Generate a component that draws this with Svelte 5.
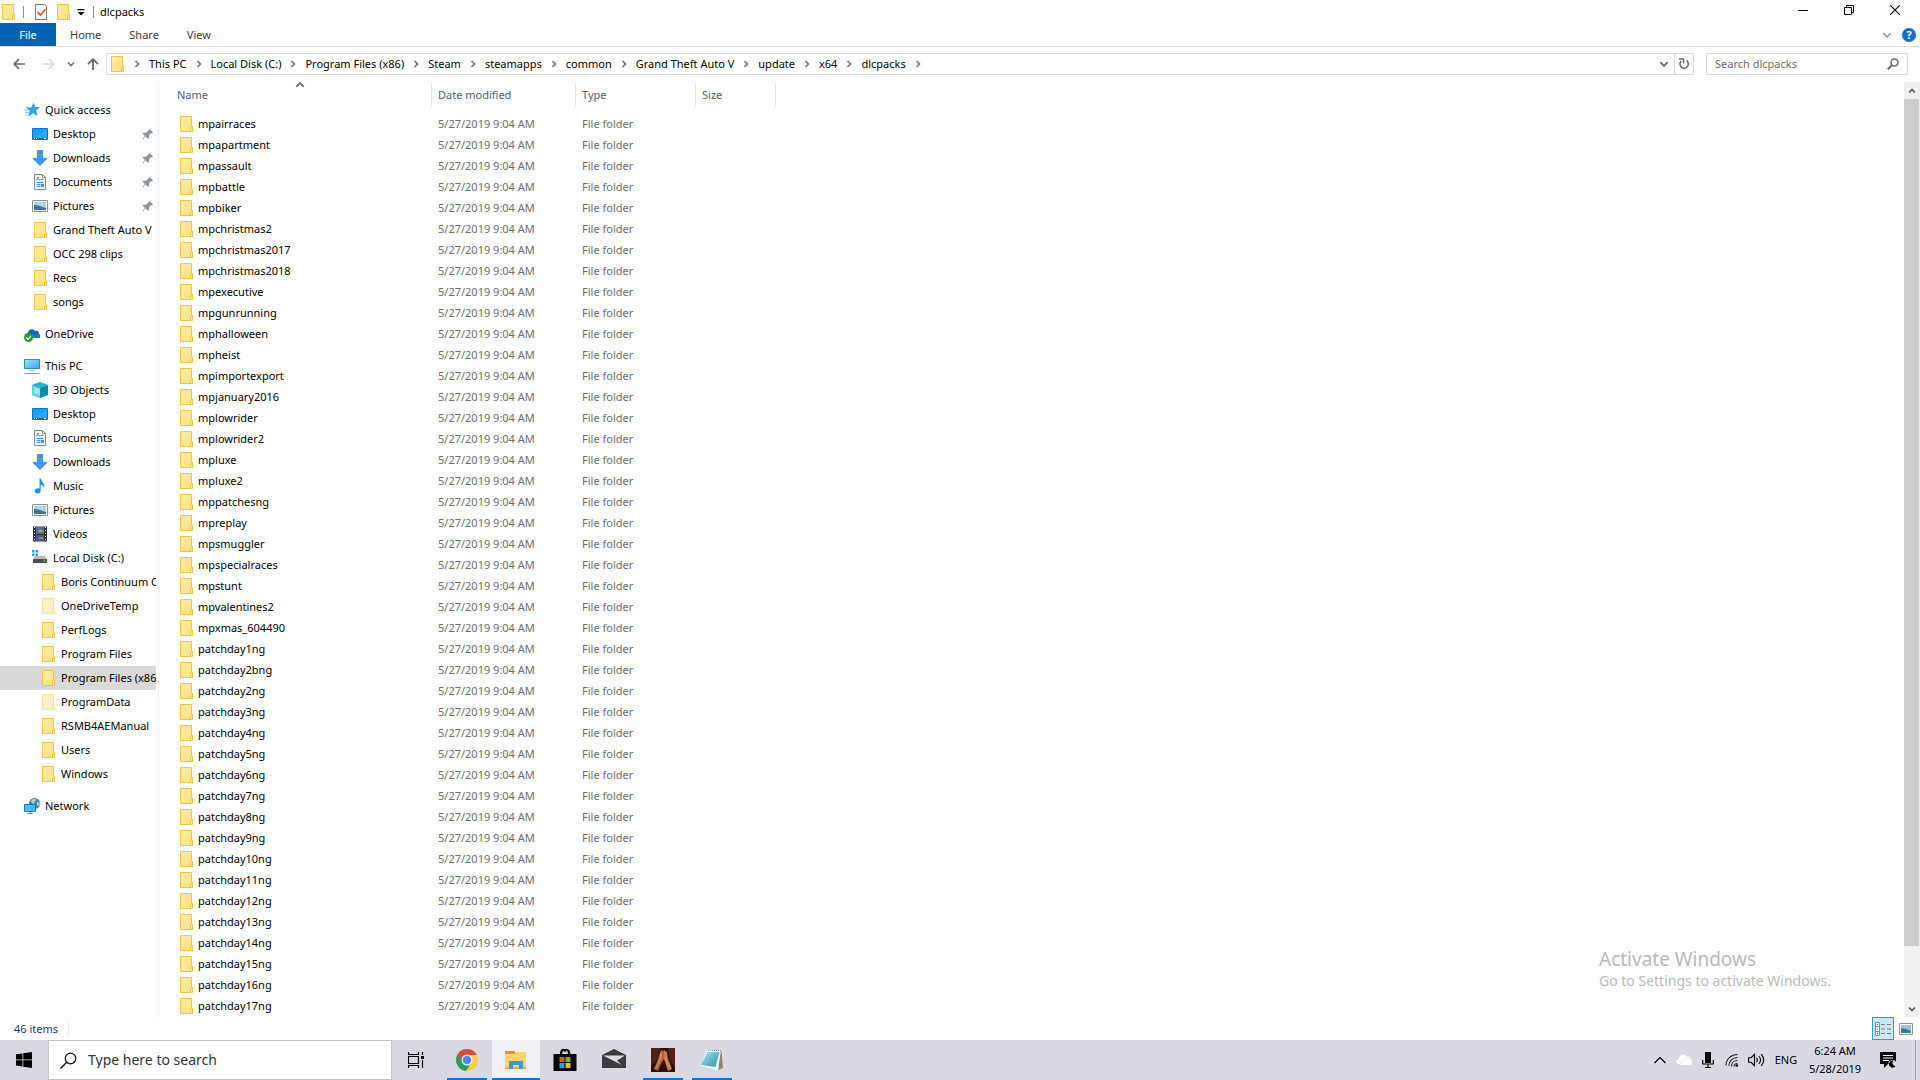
<script lang="ts">
  type NavItem = { label: string; icon: string; level: number; pinned?: boolean; selected?: boolean };

  const tabs = ['Home', 'Share', 'View'];

  const crumbs = [
    'This PC', 'Local Disk (C:)', 'Program Files (x86)', 'Steam', 'steamapps',
    'common', 'Grand Theft Auto V', 'update', 'x64', 'dlcpacks',
  ];

  const navGroups: NavItem[][] = [
    [
      { label: 'Quick access', icon: 'star', level: 0 },
      { label: 'Desktop', icon: 'desktop', level: 1, pinned: true },
      { label: 'Downloads', icon: 'download', level: 1, pinned: true },
      { label: 'Documents', icon: 'document', level: 1, pinned: true },
      { label: 'Pictures', icon: 'picture', level: 1, pinned: true },
      { label: 'Grand Theft Auto V', icon: 'folder', level: 1 },
      { label: 'OCC 298 clips', icon: 'folder', level: 1 },
      { label: 'Recs', icon: 'folder', level: 1 },
      { label: 'songs', icon: 'folder', level: 1 },
    ],
    [{ label: 'OneDrive', icon: 'onedrive', level: 0 }],
    [
      { label: 'This PC', icon: 'pc', level: 0 },
      { label: '3D Objects', icon: 'cube', level: 1 },
      { label: 'Desktop', icon: 'desktop', level: 1 },
      { label: 'Documents', icon: 'document', level: 1 },
      { label: 'Downloads', icon: 'download', level: 1 },
      { label: 'Music', icon: 'music', level: 1 },
      { label: 'Pictures', icon: 'picture', level: 1 },
      { label: 'Videos', icon: 'video', level: 1 },
      { label: 'Local Disk (C:)', icon: 'disk', level: 1 },
      { label: 'Boris Continuum Complete', icon: 'folder', level: 2 },
      { label: 'OneDriveTemp', icon: 'hidden', level: 2 },
      { label: 'PerfLogs', icon: 'folder', level: 2 },
      { label: 'Program Files', icon: 'folder', level: 2 },
      { label: 'Program Files (x86)', icon: 'folder', level: 2, selected: true },
      { label: 'ProgramData', icon: 'hidden', level: 2 },
      { label: 'RSMB4AEManual', icon: 'folder', level: 2 },
      { label: 'Users', icon: 'folder', level: 2 },
      { label: 'Windows', icon: 'folder', level: 2 },
    ],
    [{ label: 'Network', icon: 'network', level: 0 }],
  ];

  const folders = [
    'mpairraces', 'mpapartment', 'mpassault', 'mpbattle', 'mpbiker', 'mpchristmas2',
    'mpchristmas2017', 'mpchristmas2018', 'mpexecutive', 'mpgunrunning', 'mphalloween',
    'mpheist', 'mpimportexport', 'mpjanuary2016', 'mplowrider', 'mplowrider2', 'mpluxe',
    'mpluxe2', 'mppatchesng', 'mpreplay', 'mpsmuggler', 'mpspecialraces', 'mpstunt',
    'mpvalentines2', 'mpxmas_604490', 'patchday1ng', 'patchday2bng', 'patchday2ng',
    'patchday3ng', 'patchday4ng', 'patchday5ng', 'patchday6ng', 'patchday7ng',
    'patchday8ng', 'patchday9ng', 'patchday10ng', 'patchday11ng', 'patchday12ng',
    'patchday13ng', 'patchday14ng', 'patchday15ng', 'patchday16ng', 'patchday17ng',
  ];

  const apps = [
    { name: 'Google Chrome', icon: 'chrome', running: true },
    { name: 'File Explorer', icon: 'explorer', running: true, active: true },
    { name: 'Microsoft Store', icon: 'store' },
    { name: 'Mail', icon: 'mail' },
    { name: 'Game', icon: 'game', running: true },
    { name: 'Notepad', icon: 'notepad', running: true },
  ];

  let search = $state('');
  let taskSearch = $state('');
</script>

{#snippet icon(name: string)}
  <svg class="icon" viewBox="0 0 16 16" aria-hidden="true">
    {#if name === 'folder' || name === 'hidden'}
      <g opacity={name === 'hidden' ? 0.5 : 1}>
        <path d="M2.5.5h11v10h1v5h-12z" fill="url(#folderFill)" stroke="#eac54c" />
        <path d="M12.5 15.5v-4l1-1h1v5z" fill="#ffe797" stroke="#eac54c" />
      </g>
    {:else if name === 'star'}
      <path d="M9.500 1.500l1.300 4h4.400L11.700 8.300l1.300 5-4-2.500-4 2.700 1.200-4.700L3.200 6h4.400z" fill="#2fa4ee" stroke="#1283d0" stroke-width=".7" />
      <path d="M2 5.500h3M.5 8h4M1 10.500h4M2 13h2.500" stroke="#7cc3ee" stroke-width=".9" />
    {:else if name === 'desktop'}
      <path d="M.5 2.500h15v11H.5z" fill="#18a0fb" stroke="#0d73bd" />
      <path d="M1 13L15 3v10z" fill="#2fb0ff" opacity=".6" />
      <path d="M1 12.500h14" stroke="#0768b3" />
      <path d="M2 12.500h1m1 0h1m7 0h2" stroke="#fff" />
    {:else if name === 'download'}
      <path d="M5.500.5h5v8h4.500l-7 7-7-7h4.500z" fill="#3d9be9" stroke="#2a7fd0" stroke-width=".8" />
    {:else if name === 'document'}
      <path d="M2.500.5h8l3 3v12h-11z" fill="#fff" stroke="#85878a" />
      <path d="M10.500.5v3h3" fill="none" stroke="#85878a" />
      <path d="M4.500 6.500L6 3l1.500 3.500M8.500 5.500h3M4.500 8.500h7M4.500 10.500h4M4.500 12.500h4" fill="none" stroke="#2d8fd6" />
      <path d="M9 10h3v3H9z" fill="#3c8ecb" />
    {:else if name === 'picture'}
      <path d="M.5 2.500h15v11H.5z" fill="#fff" stroke="#8e9194" />
      <path d="M2 4h12v8H2z" fill="#a9d4f6" />
      <path d="M2 7l4 .5 8 2.500v2H2z" fill="#3b7c79" />
      <path d="M2 10.500l12-.5v2H2z" fill="#3a6aa3" />
    {:else if name === 'onedrive'}
      <path d="M4 12C1 11 1 7 4 7c0-4 5-5 7-2 3-1 4 1 4 3 2 1 1 4 0 4z" fill="#0b64bb" />
      <path d="M6 12c0-4 4-5 6-3 2-1 4 0 4 3z" fill="#177bdc" />
      <circle cx="4.500" cy="11.500" r="4.500" fill="#24a02d" />
      <path d="M2.200 11.500l1.800 1.800L7 10" fill="none" stroke="#fff" stroke-width="1.200" />
    {:else if name === 'pc'}
      <path d="M.5 1.500h15v9H.5z" fill="url(#screenFill)" stroke="#3288bd" />
      <path d="M5 12.500h6" stroke="#a9bdcb" />
      <path d="M0 15.500h16" stroke="#8da5b8" />
    {:else if name === 'cube'}
      <path d="M8 0l8 3v10l-8 3-8-3V3z" fill="#62d3e0" />
      <path d="M8 6l8-3v10l-8 3z" fill="#128ca5" />
      <path d="M0 3l8 3v10l-8-3z" fill="#5fd3df" />
      <path d="M0 3l8-3 8 3-8 3z" fill="#2fb3c6" />
      <path d="M2 5l6 2v6l-6-2z" fill="#b6f2f2" opacity=".7" />
    {:else if name === 'music'}
      <path d="M7.500.5h1.200c.5 3 4.500 4.500 3.300 9.500-.5-2-1.500-3-3.300-3.500v6c0 4-6 4-6 .5 0-2.500 3-3.300 4.800-2.300z" fill="#1597ee" />
    {:else if name === 'video'}
      <path d="M1 .5h14v15H1z" fill="#333" />
      <path d="M4 1h8v7H4z" fill="#50709e" />
      <path d="M4 9h8v6H4z" fill="#405fa2" />
      <path d="M6 5l3-2 2 3H7z" fill="#c4ae3d" />
      <path d="M7 11h4v2H7z" fill="#e06c30" />
      <path d="M2.500 1v14M13.500 1v14" stroke="#fff" stroke-dasharray="1 2" />
    {:else if name === 'disk'}
      <path d="M0 0h2.500v2.500H0zM3.500 0H6v2.500H3.500zM0 3.500h2.500V6H0zM3.500 3.500H6V6H3.500z" fill="#16adea" />
      <path d="M3 6h10l2 4H1z" fill="#b8babb" />
      <path d="M1 9h14v4H1z" fill="#4a4f50" />
      <path d="M11.500 11h1.500" stroke="#5fe15a" stroke-width="1.500" />
    {:else if name === 'network'}
      <circle cx="10.500" cy="5.500" r="5.500" fill="#438aa9" />
      <path d="M7 3c2-3 5-2 5-1s-2 1-2 3-2 1-3-2zM13 4l3 1-1 3-2-1z" fill="#a5d7e3" />
      <path d="M.5 6.500h11v7H.5z" fill="#43bdfc" stroke="#2476ac" />
      <path d="M3 15.500h6M6 14v1" stroke="#819aad" />
    {:else if name === 'pin'}
      <path d="M9.500 3L13 6.500l-1 .8-1-.2-2.200 2.400.2 2.500-1 1-2.400-2.400L3 13.500l-.5-.5 2.400-3L2.500 7.500l1-1 2.500.2L8.500 4.500l-.2-1z" fill="#8995a1" />
    {/if}
  </svg>
{/snippet}

{#snippet chevron(dir: 'right' | 'down' | 'up')}
  <svg class="chevron {dir}" viewBox="0 0 8 8" aria-hidden="true">
    <path d="M1 2.500l3 3 3-3" fill="none" stroke="currentColor" stroke-width="1.600" />
  </svg>
{/snippet}

{#snippet appIcon(name: string)}
  <svg class="app-icon" viewBox="0 0 24 24" aria-hidden="true">
    {#if name === 'chrome'}
      <circle cx="12" cy="12" r="11" fill="#fbcb43" />
      <path d="M12 12L2.500 6.500A11 11 0 0 0 11 23l5.500-8.500z" fill="#25a05b" />
      <path d="M12 7h9.800A11 11 0 0 0 2.500 6.500L7.500 14z" fill="#d94b3d" />
      <circle cx="12" cy="12" r="5.500" fill="#fff" />
      <circle cx="12" cy="12" r="4.300" fill="#4888f0" />
    {:else if name === 'explorer'}
      <path d="M1 3h9l2 2h10v16H1z" fill="#e9b12d" />
      <path d="M1 6h10l2-2h9v15H1z" fill="#fcd770" />
      <path d="M1 3h9.500v3H1z" fill="#d99c12" />
      <path d="M5 13h14v8h-4v-4H9v4H5z" fill="#3e98dc" />
    {:else if name === 'store'}
      <path d="M7.500 7c0-7 4-7 4.500-3 .5-4 5-3 5 3M8.500 6c1-6 7-6 7 0" fill="none" stroke="#000" stroke-width="1.200" />
      <path d="M.5 6h23v17H.5z" />
      <path d="M6.500 9h5v5h-5z" fill="#f15127" />
      <path d="M12.500 9h5v5h-5z" fill="#7fba00" />
      <path d="M6.500 15h5v5h-5z" fill="#11a6ef" />
      <path d="M12.500 15h5v5h-5z" fill="#fdb913" />
    {:else if name === 'mail'}
      <path d="M0 7l12-6 12 6v13H0z" fill="#3b3b3d" />
      <path d="M1 7.500h22l-8 5 5 4.500z" fill="#dddbe5" />
    {:else if name === 'game'}
      <path d="M0 0h24v24H0z" fill="#2a100b" />
      <path d="M0 0h10L6 12l-6 6z" fill="#4d2015" />
      <path d="M17 0h7v20l-5-8z" fill="#542318" />
      <path d="M10 2l3 1 1 7-3 4-4 9-4-2 4-10z" fill="#a65c36" />
      <path d="M13 2l3 2 1 7 4 10-4 2-3-9-2-6z" fill="#c7794a" />
      <path d="M9 5l2-1v6l-5 10-2 1 4-10zM15 7l1 6 4 8-3-2-3-8z" fill="#e5a268" opacity=".6" />
    {:else if name === 'notepad'}
      <path d="M7 2l15-1 1 19-5 2z" fill="#e9e3d3" />
      <path d="M20 3l1.500 0 1.500 17-5 2z" fill="#8d8571" />
      <path d="M7 2h14l-3 20L.5 18z" fill="#f1fafa" />
      <path d="M7.500 4h12l-4 15L1 17z" fill="url(#noteFill)" />
      <path d="M8 2.500h13" stroke="#829e9e" stroke-dasharray="1 1" />
    {/if}
  </svg>
{/snippet}

<svg class="defs" aria-hidden="true">
  <defs>
    <linearGradient id="folderFill" x1="0" y1="0" x2="1" y2="1">
      <stop offset="0" stop-color="#ffeba7" />
      <stop offset="1" stop-color="#ffe17e" />
    </linearGradient>
    <linearGradient id="screenFill" x1="0" y1="0" x2="1" y2="1">
      <stop offset="0" stop-color="#9ddcff" />
      <stop offset="1" stop-color="#35abf0" />
    </linearGradient>
    <linearGradient id="noteFill" x1="0" y1="0" x2="1" y2="1">
      <stop offset="0" stop-color="#a8e2ee" />
      <stop offset="1" stop-color="#2795ad" />
    </linearGradient>
  </defs>
</svg>

<div class="screen">
  <header class="titlebar">
    {@render icon('folder')}
    <span class="bar"></span>
    <button class="plain quick" aria-label="Properties">
      <svg class="icon" viewBox="0 0 16 16">
        <path d="M2.500.5h9l2 2v13h-11z" fill="#fafafa" stroke="#77797b" />
        <path d="M4.500 8l3 3 5-6" fill="none" stroke="#ee5a24" stroke-width="1.800" />
      </svg>
    </button>
    <button class="plain quick" aria-label="New folder">{@render icon('folder')}</button>
    <button class="plain quick-more" aria-label="Customize Quick Access Toolbar">
      <svg width="8" height="8" viewBox="0 0 8 8"><path d="M.5 1h7v1.200h-7zM.5 4h7L4 7.500z" /></svg>
    </button>
    <span class="bar"></span>
    <h1>dlcpacks</h1>
    <div class="window-buttons">
      <button class="plain" aria-label="Minimize">
        <svg width="10" height="10" viewBox="0 0 10 10"><path d="M0 5.500h10" stroke="#000" /></svg>
      </button>
      <button class="plain" aria-label="Restore">
        <svg width="10" height="10" viewBox="0 0 10 10"><path d="M.5 2.500h7v7h-7zM2.500 2.500v-2h7v7h-2" fill="none" stroke="#000" /></svg>
      </button>
      <button class="plain" aria-label="Close">
        <svg width="10" height="10" viewBox="0 0 10 10"><path d="M0 0l10 10M10 0L0 10" stroke="#000" stroke-width="1.100" /></svg>
      </button>
    </div>
  </header>

  <div class="tabs">
    <button class="plain file">File</button>
    {#each tabs as tab}
      <button class="plain tab">{tab}</button>
    {/each}
    <div class="tabs-end">
      <button class="plain expand" aria-label="Expand the Ribbon">{@render chevron('down')}</button>
      <button class="plain help" aria-label="Help">?</button>
    </div>
  </div>

  <div class="toolbar">
    <div class="history">
      <button class="plain" aria-label="Back">
        <svg width="12" height="12" viewBox="0 0 12 12"><path d="M12 6H1.500M6 1.200L1.200 6 6 10.800" fill="none" stroke="#6c6c6c" stroke-width="1.700" /></svg>
      </button>
      <button class="plain forward" aria-label="Forward" disabled>
        <svg width="12" height="12" viewBox="0 0 12 12"><path d="M0 6h10.500M6 1.200L10.800 6 6 10.800" fill="none" stroke="#d8d8d8" stroke-width="1.700" /></svg>
      </button>
      <button class="plain recent" aria-label="Recent locations">{@render chevron('down')}</button>
      <button class="plain" aria-label="Up">
        <svg width="12" height="12" viewBox="0 0 12 12"><path d="M6 12V1.500M1 6.200L6 1.200l5 5" fill="none" stroke="#6c6c6c" stroke-width="1.900" /></svg>
      </button>
    </div>
    <div class="address">
      {@render icon('folder')}
      <span class="sep">{@render chevron('right')}</span>
      {#each crumbs as crumb}
        <button class="plain">{crumb}</button>
        <span class="sep">{@render chevron('right')}</span>
      {/each}
      <button class="plain previous" aria-label="Previous locations">{@render chevron('down')}</button>
      <button class="plain refresh" aria-label="Refresh">
        <svg width="12" height="12" viewBox="0 0 12 12">
          <path d="M8.500 2.500A4.200 4.200 0 1 1 3.200 3" fill="none" stroke="#6c6c6c" stroke-width="1.600" />
          <path d="M1 1h4.500v4.500" fill="none" stroke="#6c6c6c" stroke-width="1.500" />
        </svg>
      </button>
    </div>
    <label class="search">
      <input type="text" aria-label="Search dlcpacks" placeholder="Search dlcpacks" bind:value={search} />
      <svg width="12" height="12" viewBox="0 0 12 12"><circle cx="7.500" cy="4.500" r="3.500" fill="none" stroke="#6c6c6c" stroke-width="1.600" /><path d="M5 7L.8 11.200" stroke="#6c6c6c" stroke-width="2" /></svg>
    </label>
  </div>

  <div class="body">
    <nav>
      {#each navGroups as group}
        <ul>
          {#each group as item}
            <li class="level-{item.level}" class:selected={item.selected}>
              <a href="#nav">
                {@render icon(item.icon)}
                <span>{item.label}</span>
              </a>
              {#if item.pinned}{@render icon('pin')}{/if}
            </li>
          {/each}
        </ul>
      {/each}
    </nav>

    <main>
      <table>
        <colgroup>
          <col class="col-name" />
          <col class="col-date" />
          <col class="col-type" />
          <col class="col-size" />
          <col />
        </colgroup>
        <thead>
          <tr>
            <th>Name <span class="sort">{@render chevron('up')}</span></th>
            <th>Date modified</th>
            <th>Type</th>
            <th>Size</th>
            <td></td>
          </tr>
        </thead>
        <tbody>
          {#each folders as folder}
            <tr>
              <td><div class="name">{@render icon('folder')}{folder}</div></td>
              <td>5/27/2019 9:04 AM</td>
              <td>File folder</td>
              <td></td>
              <td></td>
            </tr>
          {/each}
        </tbody>
      </table>
      <div class="watermark">
        <p class="watermark-title">Activate Windows</p>
        <p>Go to Settings to activate Windows.</p>
      </div>
    </main>

    <div class="scrollbar">
      <button class="plain" aria-label="Scroll up">{@render chevron('up')}</button>
      <div class="track"><div class="thumb"></div></div>
      <button class="plain" aria-label="Scroll down">{@render chevron('down')}</button>
    </div>
  </div>

  <div class="status">
    <span>46 items</span>
    <div class="views">
      <button class="plain details" aria-label="Details view">
        <svg width="16" height="14" viewBox="0 0 16 14">
          <path d="M.5.5h4v13h-4zM.5 4.500h4M.5 9.500h4" fill="#fff" stroke="#8b8b8b" />
          <path d="M6 2.500h4m2 0h4M6 7h4m2 0h4M6 11.500h4m2 0h4" stroke="#7a7a7a" />
          <path d="M2 2h1v1H2z" fill="#2d7d46" /><path d="M2 6.500h1v1H2z" fill="#2a7bd0" /><path d="M2 11h1v1H2z" fill="#e02020" />
        </svg>
      </button>
      <button class="plain" aria-label="Large icons view">
        <svg width="14" height="12" viewBox="0 0 14 12">
          <path d="M.5.5h13v11H.5z" fill="#fff" stroke="#8e9194" />
          <path d="M2 2h10v8H2z" fill="#8fc4f3" />
          <path d="M2 5l5 1 5 2v2H2z" fill="#3b7c79" />
        </svg>
      </button>
    </div>
  </div>

  <footer class="taskbar">
    <button class="plain start" aria-label="Start">
      <svg width="16" height="16" viewBox="0 0 16 16"><path d="M0 2.300l6.500-.9v6.100H0zM7.300 1.300L16 0v7.500H7.300zM0 8.300h6.500v6.100L0 13.500zM7.300 8.300H16V16l-8.700-1.300z" /></svg>
    </button>
    <label class="task-search">
      <svg width="17" height="17" viewBox="0 0 17 17"><circle cx="10.500" cy="6.500" r="5.300" fill="none" stroke="#111" stroke-width="1.200" /><path d="M6.700 10.300L.5 16.500" stroke="#111" stroke-width="1.300" /></svg>
      <input type="text" aria-label="Type here to search" placeholder="Type here to search" bind:value={taskSearch} />
    </label>
    <button class="plain task-view" aria-label="Task View">
      <svg width="16" height="16" viewBox="0 0 16 16">
        <path d="M.5 4.500h10v7H.5zM.5 0v2.500h10V0M.5 16v-2.500h10V16M14.500 0v3M14.500 8v8" fill="none" stroke="#000" stroke-width="1.200" />
        <path d="M13 4h3v3h-3z" />
      </svg>
    </button>
    {#each apps as app}
      <button class="plain app" class:running={app.running} class:active={app.active} aria-label={app.name}>
        {@render appIcon(app.icon)}
      </button>
    {/each}
    <div class="tray">
      <button class="plain" aria-label="Show hidden icons">
        <svg width="12" height="8" viewBox="0 0 12 8"><path d="M.5 7L6 1.500 11.500 7" fill="none" stroke="#000" stroke-width="1.200" /></svg>
      </button>
      <button class="plain" aria-label="OneDrive">
        <svg width="16" height="12" viewBox="0 0 16 12"><path d="M2 10C-1 9 0 5 3 5c0-5 6-6 8-2 3-1 4 1 4 3 2 2 1 5-1 5H6c-2 0-2-1-2-1z" fill="#fff" /><path d="M5 10c-1-3 2-5 4-4 1-3 4-2 5-1" fill="none" stroke="#dcdae4" stroke-width=".7" /></svg>
      </button>
      <button class="plain" aria-label="Microphone">
        <svg width="12" height="16" viewBox="0 0 12 16"><path d="M3 0h6v11H3z" /><path d="M.7 8v4h10.600V8M6 12v3.500M3 15.500h6" fill="none" stroke="#000" stroke-width="1.200" /></svg>
      </button>
      <button class="plain" aria-label="Network">
        <svg width="14" height="14" viewBox="0 0 14 14">
          <path d="M1 12.500C1 6 6 1.500 12.500 1.500M3.800 13c0-5 4-8.500 8.700-8.500M6.500 13.500c0-3.500 2.500-6 6-6M9 13.500c0-2 1.500-3 3.500-3" fill="none" stroke="#222" stroke-width="1.100" />
          <circle cx="11.800" cy="12.500" r="1.300" />
        </svg>
      </button>
      <button class="plain" aria-label="Volume">
        <svg width="17" height="14" viewBox="0 0 17 14"><path d="M.6 4.700h2.500L6.500 1.300v11.400L3.100 9.300H.6zM8.500 4.800c1 1.300 1 3.100 0 4.400M10.800 3c2.200 2.500 2.200 5.500 0 8M13.200 1.200c3.200 3.700 3.200 7.900 0 11.600" fill="none" stroke="#000" stroke-width="1.100" /></svg>
      </button>
      <button class="plain language">ENG</button>
      <button class="plain clock"><span>6:24 AM</span><span>5/28/2019</span></button>
      <button class="plain action-center" aria-label="Notifications">
        <svg width="16" height="16" viewBox="0 0 16 16">
          <path d="M0 0h16v12H8l-4 4v-4H0z" />
          <path d="M3 3.500h10M3 6h10M3 8.500h6" stroke="#fff" stroke-width="1.100" />
          <circle cx="12.500" cy="12" r="4" fill="#dbd9e3" />
          <path d="M13.500 8.700a3.500 3.500 0 1 0 2 5.300 3 3 0 0 1-2-5.300z" />
        </svg>
      </button>
      <button class="plain show-desktop" aria-label="Show desktop"></button>
    </div>
  </footer>
</div>

<style>
  :global(body) {
    margin: 0;
    background: #fff;
  }

  .defs {
    position: absolute;
    width: 0;
    height: 0;
  }

  .screen {
    display: flex;
    flex-direction: column;
    height: 100vh;
    overflow: hidden;
    font-family: 'Noto Sans', 'Open Sans', sans-serif;
    font-size: 11px;
    line-height: 16px;
    color: #000;
  }

  .plain {
    display: flex;
    align-items: center;
    justify-content: center;
    padding: 0;
    border: 0;
    background: none;
    font: inherit;
    color: inherit;
    white-space: nowrap;
  }

  .icon {
    flex: none;
    width: 16px;
    height: 16px;
  }

  .chevron {
    display: block;
    width: 8px;
    height: 8px;
    color: #707070;
  }

  .chevron.right { transform: rotate(-90deg); }
  .chevron.up { transform: rotate(180deg); }

  /* title bar */
  .titlebar {
    display: flex;
    align-items: center;
    height: 23px;
  }

  .titlebar > .icon {
    margin-right: 7px;
  }

  .bar {
    width: 1px;
    height: 12px;
    margin-right: 6px;
    background: #8f8f8f;
  }

  .quick {
    width: 22px;
  }

  .quick-more {
    width: 14px;
    margin-right: 5px;
  }

  .titlebar h1 {
    margin: 0;
    font-size: 11px;
    font-weight: 400;
  }

  .window-buttons {
    display: flex;
    align-self: flex-start;
    margin-left: auto;
    padding-right: 2px;
  }

  .window-buttons button {
    width: 46px;
    height: 20px;
  }

  /* ribbon tabs */
  .tabs {
    display: flex;
    height: 23px;
    border-bottom: 1px solid #dadbdc;
    color: #3b3b3b;
  }

  .file {
    width: 56px;
    background: #0063b1;
    color: #fff;
  }

  .tab {
    padding: 0 14px;
  }

  .tabs-end {
    display: flex;
    align-items: center;
    gap: 10px;
    margin-left: auto;
    padding-right: 4px;
  }

  .expand .chevron {
    width: 10px;
    height: 10px;
    color: #a5a5a5;
  }

  .help {
    width: 14px;
    height: 14px;
    border-radius: 50%;
    background: #0f72cf;
    color: #fff;
    font-weight: 700;
    line-height: 14px;
  }

  /* address row */
  .toolbar {
    display: flex;
    padding: 6px 12px 7px 0;
  }

  .history {
    display: flex;
    padding: 0 7px 0 13px;
  }

  .forward {
    margin-left: 18px;
  }

  .recent {
    width: 32px;
  }

  .address,
  .search {
    display: flex;
    align-items: center;
    height: 20px;
    border: 1px solid #d9d9d9;
  }

  .address {
    flex: 1;
    min-width: 0;
    padding-left: 2px;
  }

  .sep {
    display: flex;
    justify-content: center;
    width: 24px;
  }

  .previous {
    width: 20px;
    margin-left: auto;
  }

  .previous .chevron {
    width: 10px;
    height: 10px;
  }

  .refresh {
    width: 19px;
    height: 20px;
    border-left: 1px solid #d9d9d9;
  }

  .search {
    width: 184px;
    margin-left: 12px;
    padding: 0 8px;
  }

  input {
    flex: 1;
    min-width: 0;
    padding: 0;
    border: 0;
    outline: 0;
    background: none;
    font: inherit;
  }

  input::placeholder {
    color: #6d6d6d;
    opacity: 1;
  }

  /* explorer body */
  .body {
    display: flex;
    flex: 1;
    min-height: 0;
  }

  nav {
    width: 159px;
    padding-top: 16px;
    box-sizing: border-box;
    border-right: 1px solid #f2f2f2;
    overflow: hidden;
  }

  ul {
    margin: 0 0 8px;
    padding: 0;
    list-style: none;
  }

  li {
    display: flex;
    align-items: center;
    height: 24px;
    margin-right: 2px;
    padding-left: 24px;
    overflow: hidden;
  }

  .level-1 { padding-left: 32px; }
  .level-2 { padding-left: 40px; }
  .selected { background: #d9d9d9; }

  li > .icon {
    margin-left: auto;
  }

  li a {
    display: flex;
    align-items: center;
    gap: 5px;
    color: inherit;
    text-decoration: none;
    white-space: nowrap;
  }

  main {
    position: relative;
    flex: 1;
    min-width: 0;
    overflow: hidden;
  }

  table {
    width: 100%;
    table-layout: fixed;
    border-collapse: separate;
    border-spacing: 0;
  }

  .col-name { width: 273px; }
  .col-date { width: 144px; }
  .col-type { width: 120px; }
  .col-size { width: 80px; }

  th {
    position: relative;
    height: 25px;
    padding: 0 6px;
    border-right: 1px solid #e5e5e5;
    font-weight: 400;
    text-align: left;
    color: #4c607a;
  }

  th:first-child {
    padding-left: 18px;
  }

  .sort {
    position: absolute;
    top: -2px;
    left: 50%;
  }

  .sort .chevron {
    width: 10px;
    height: 10px;
  }

  tbody::before {
    content: '';
    display: block;
    height: 6px;
  }

  td {
    height: 21px;
    padding: 0 6px;
    color: #6d6d6d;
    white-space: nowrap;
  }

  td:first-child {
    padding-left: 19px;
    color: #000;
  }

  .name {
    display: flex;
    align-items: center;
    gap: 4px;
  }

  .watermark {
    position: absolute;
    right: 68px;
    bottom: 26px;
    width: 237px;
    color: #b9b9b9;
    font-size: 14px;
    line-height: 20px;
    white-space: nowrap;
  }

  .watermark p {
    margin: 0;
  }

  .watermark .watermark-title {
    font-size: 19px;
    line-height: 24px;
  }

  .scrollbar {
    display: flex;
    flex-direction: column;
    width: 16px;
    background: #f0f0f0;
  }

  .scrollbar button {
    height: 17px;
  }

  .scrollbar .chevron {
    color: #555;
  }

  .track {
    flex: 1;
  }

  .thumb {
    height: 94%;
    margin-right: 1px;
    background: #cdcdcd;
  }

  /* status bar */
  .status {
    display: flex;
    align-items: center;
    justify-content: space-between;
    height: 23px;
    padding: 0 4px 0 14px;
    color: #1e395b;
  }

  .status > span {
    padding-right: 10px;
    border-right: 1px solid #eee;
  }

  .views {
    display: flex;
    gap: 2px;
  }

  .views button {
    width: 20px;
    height: 23px;
  }

  .views .details {
    width: 22px;
    border: 1px solid #26a0da;
    background: #cbe8f6;
  }

  /* taskbar */
  .taskbar {
    display: flex;
    height: 40px;
    background: #dad8e2;
  }

  .start {
    width: 48px;
  }

  .task-search {
    display: flex;
    align-items: center;
    gap: 11px;
    width: 331px;
    padding-left: 11px;
    border: 1px solid #c8c8c8;
    background: #fff;
    font-size: 14px;
  }

  .task-search input::placeholder {
    color: #333;
  }

  .task-view {
    width: 48px;
    margin-right: 3px;
  }

  .app {
    width: 48px;
    margin-right: 1px;
    background: linear-gradient(#0078d7, #0078d7) bottom / 0 2px no-repeat;
  }

  .app.running {
    background-size: 40px 2px;
  }

  .app.active {
    background-color: #f1f0f5;
    background-size: 100% 2px;
  }

  .app-icon {
    width: 24px;
    height: 24px;
  }

  .tray {
    display: flex;
    margin-left: auto;
  }

  .tray button {
    width: 24px;
  }

  .tray .language {
    width: 36px;
    margin-right: 5px;
  }

  .tray .clock {
    flex-direction: column;
    gap: 2px;
    width: 52px;
  }

  .tray .action-center {
    width: 54px;
  }

  .tray .show-desktop {
    width: 5px;
    border-left: 1px solid #a3a2aa;
  }
</style>
